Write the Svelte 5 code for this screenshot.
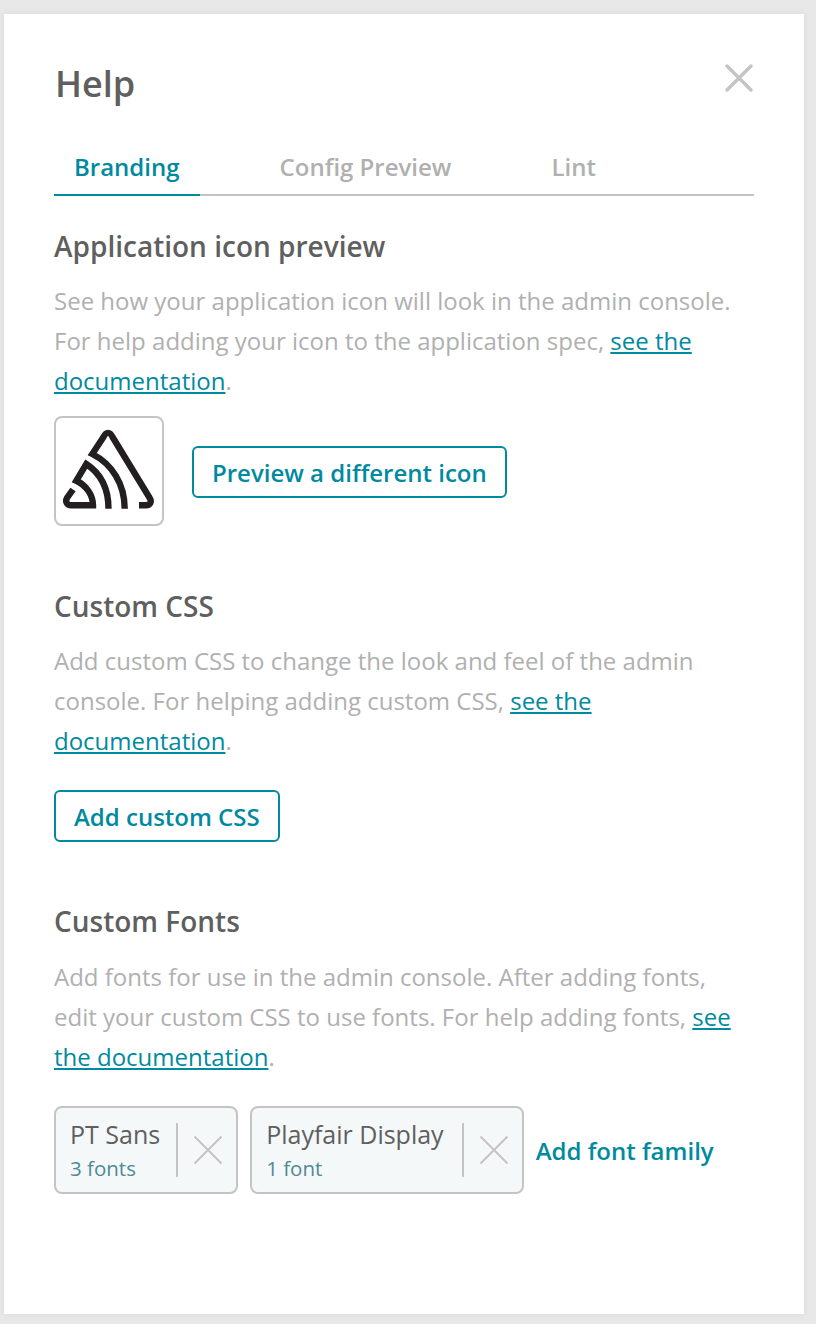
<script>
  const tabs = ["Branding", "Config Preview", "Lint"];
  const fonts = [
    { name: "PT Sans", count: "3 fonts" },
    { name: "Playfair Display", count: "1 font" }
  ];
</script>

<div class="page">
  <div class="modal">
    <div class="head">
      <h1>Help</h1>
      <svg class="close" width="28" height="28" viewBox="0 0 28 28">
        <path d="M2 2 L26 26 M26 2 L2 26" stroke="#c4c4c4" stroke-width="3.4" stroke-linecap="round" fill="none" />
      </svg>
    </div>

    <div class="tabs">
      {#each tabs as tab, i}
        <div class="tab" class:active={i === 0}>{tab}</div>
      {/each}
    </div>

    <section class="icon-section">
      <h2>Application icon preview</h2>
      <p>
        See how your application icon will look in the admin console.
        For help adding your icon to the application spec, <a href="#docs">see the documentation</a>.
      </p>
      <div class="icon-row">
        <div class="icon-box">
          <svg width="110" height="110" viewBox="0 0 110 110" fill="none" stroke="#231f20" stroke-width="6.4">
            <path d="M85 89.3 H92 C96.5 89.3 98 85.5 95.7 82 L58.5 21 C56 15.5 52 15.5 49.5 21 L38.3 38 C58 48 70.7 68 70.7 92.7" />
            <path d="M54.5 92.7 C54.5 72 46 57 32.3 48 L22.3 64.7 C32 69 39 79 39 89.3 H17 C13 89.3 11 85.5 13 82 L19 73.5" />
          </svg>
        </div>
        <button class="btn">Preview a different icon</button>
      </div>
    </section>

    <section class="css-section">
      <h2>Custom CSS</h2>
      <p>
        Add custom CSS to change the look and feel of the admin console.
        For helping adding custom CSS, <a href="#docs">see the documentation</a>.
      </p>
      <button class="btn add-css">Add custom CSS</button>
    </section>

    <section class="fonts-section">
      <h2>Custom Fonts</h2>
      <p>
        Add fonts for use in the admin console. After adding fonts, edit your custom CSS to use fonts.
        For help adding fonts, <a href="#docs">see the documentation</a>.
      </p>
      <div class="font-row">
        {#each fonts as font}
          <div class="chip">
            <div class="chip-text">
              <div class="chip-name">{font.name}</div>
              <div class="chip-count">{font.count}</div>
            </div>
            <div class="chip-divider"></div>
            <svg width="30" height="30" viewBox="0 0 30 30">
              <path d="M1.5 1.5 L28.5 28.5 M28.5 1.5 L1.5 28.5" stroke="#c4c4c4" stroke-width="2" fill="none" />
            </svg>
          </div>
        {/each}
        <a class="add-font" href="#add">Add font family</a>
      </div>
    </section>
  </div>
</div>

<style>
  :global(body) {
    margin: 0;
    background: #e8e8e8;
  }
  .page {
    height: 1324px;
    padding: 14px 12px 10px 4px;
    box-sizing: border-box;
    font-family: "Open Sans", sans-serif;
  }
  .modal {
    height: 1300px;
    box-sizing: border-box;
    background: #fff;
    padding: 0 50px;
    box-shadow: 0 0 6px rgba(0, 0, 0, 0.08);
  }
  .head {
    display: flex;
    justify-content: space-between;
    padding-top: 46px;
    height: 60px;
  }
  h1 {
    margin: 0 0 0 1px;
    font-size: 36px;
    line-height: 48px;
    font-weight: 600;
    color: #5f5f5f;
  }
  .close {
    margin-top: 4px;
    margin-right: 1px;
  }
  .tabs {
    display: flex;
    gap: 60px;
    margin-top: 28px;
    border-bottom: 2px solid #c4c4c4;
  }
  .tab {
    padding: 0 20px;
    height: 48px;
    line-height: 38px;
    margin-bottom: -2px;
    box-sizing: border-box;
    font-size: 24px;
    font-weight: 600;
    color: #b0b0b0;
  }
  .tab.active {
    color: #008a9f;
    border-bottom: 2px solid #008a9f;
  }
  h2 {
    margin: 0;
    font-size: 28px;
    line-height: 36px;
    font-weight: 600;
    color: #5f5f5f;
  }
  p {
    margin: 17px 0 0;
    font-size: 24px;
    line-height: 40px;
    color: #b0b0b0;
  }
  a {
    color: #008a9f;
  }
  .icon-section {
    margin-top: 32px;
  }
  .icon-row {
    display: flex;
    align-items: center;
    gap: 28px;
    margin-top: 15px;
  }
  .icon-row .btn {
    margin-top: 2px;
  }
  .icon-box {
    width: 110px;
    height: 110px;
    box-sizing: border-box;
    border: 2px solid #c4c4c4;
    border-radius: 8px;
    display: flex;
    align-items: center;
    justify-content: center;
  }
  .icon-box svg {
    flex: none;
  }
  .btn {
    height: 52px;
    padding: 0 18px;
    background: #fff;
    border: 2px solid #008a9f;
    border-radius: 6px;
    font-family: inherit;
    font-size: 24px;
    font-weight: 600;
    color: #008a9f;
  }
  .css-section {
    margin-top: 62px;
  }
  .add-css {
    display: block;
    margin-top: 29px;
  }
  .fonts-section {
    margin-top: 61px;
  }
  .fonts-section p {
    margin-top: 18px;
  }
  .font-row {
    display: flex;
    align-items: center;
    gap: 12px;
    margin-top: 29px;
  }
  .chip {
    display: flex;
    align-items: center;
    height: 88px;
    box-sizing: border-box;
    padding: 0 13px 0 14px;
    background: #f5f8f9;
    border: 2px solid #c4c4c4;
    border-radius: 8px;
  }
  .chip-name {
    font-size: 25px;
    line-height: 34px;
    font-weight: 500;
    color: #5f5f5f;
  }
  .chip-count {
    margin-top: 2px;
    font-size: 20.5px;
    line-height: 30px;
    color: #4f8a93;
  }
  .chip-divider {
    width: 2px;
    height: 54px;
    margin: 0 15px 0 16px;
    background: #c4c4c4;
  }
  .chip:nth-child(2) .chip-divider {
    margin-left: 18px;
  }
  .add-font {
    font-size: 24px;
    font-weight: 600;
    text-decoration: none;
  }
</style>
